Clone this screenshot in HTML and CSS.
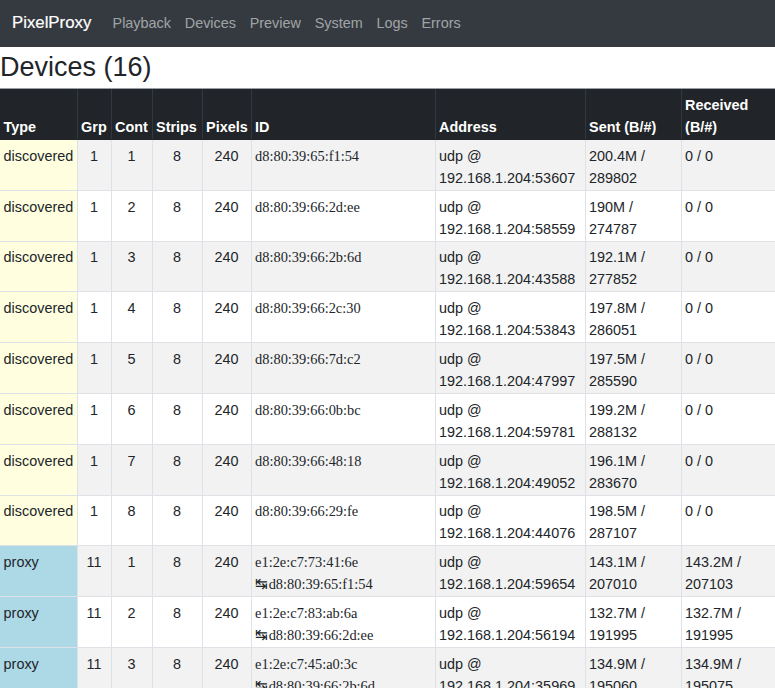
FILE: index.html
```html
<!DOCTYPE html>
<html lang="en">
<head>
<meta charset="utf-8">
<title>PixelProxy - Devices</title>
<link rel="stylesheet" href="styles.css">
</head>
<body>
<nav class="navbar">
  <a class="brand" href="#">PixelProxy</a>
  <ul class="nav-links">
    <li><a href="#">Playback</a></li>
    <li><a href="#">Devices</a></li>
    <li><a href="#">Preview</a></li>
    <li><a href="#">System</a></li>
    <li><a href="#">Logs</a></li>
    <li><a href="#">Errors</a></li>
  </ul>
</nav>
<main>
  <h1 class="page-title">Devices (16)</h1>
  <table class="devices">
    <colgroup>
      <col class="c-type"><col class="c-grp"><col class="c-cont"><col class="c-strips"><col class="c-pixels"><col class="c-id"><col class="c-addr"><col class="c-sent"><col class="c-recv">
    </colgroup>
    <thead>
      <tr>
        <th>Type</th><th>Grp</th><th>Cont</th><th>Strips</th><th>Pixels</th><th>ID</th><th>Address</th><th>Sent (B/#)</th><th>Received (B/#)</th>
      </tr>
    </thead>
    <tbody>
      <tr><td class="type discovered">discovered</td><td class="num">1</td><td class="num">1</td><td class="num">8</td><td class="num">240</td><td class="id">d8:80:39:65:f1:54</td><td>udp @ 192.168.1.204:53607</td><td>200.4M / 289802</td><td>0 / 0</td></tr>
      <tr><td class="type discovered">discovered</td><td class="num">1</td><td class="num">2</td><td class="num">8</td><td class="num">240</td><td class="id">d8:80:39:66:2d:ee</td><td>udp @ 192.168.1.204:58559</td><td>190M / 274787</td><td>0 / 0</td></tr>
      <tr><td class="type discovered">discovered</td><td class="num">1</td><td class="num">3</td><td class="num">8</td><td class="num">240</td><td class="id">d8:80:39:66:2b:6d</td><td>udp @ 192.168.1.204:43588</td><td>192.1M / 277852</td><td>0 / 0</td></tr>
      <tr><td class="type discovered">discovered</td><td class="num">1</td><td class="num">4</td><td class="num">8</td><td class="num">240</td><td class="id">d8:80:39:66:2c:30</td><td>udp @ 192.168.1.204:53843</td><td>197.8M / 286051</td><td>0 / 0</td></tr>
      <tr><td class="type discovered">discovered</td><td class="num">1</td><td class="num">5</td><td class="num">8</td><td class="num">240</td><td class="id">d8:80:39:66:7d:c2</td><td>udp @ 192.168.1.204:47997</td><td>197.5M / 285590</td><td>0 / 0</td></tr>
      <tr><td class="type discovered">discovered</td><td class="num">1</td><td class="num">6</td><td class="num">8</td><td class="num">240</td><td class="id">d8:80:39:66:0b:bc</td><td>udp @ 192.168.1.204:59781</td><td>199.2M / 288132</td><td>0 / 0</td></tr>
      <tr><td class="type discovered">discovered</td><td class="num">1</td><td class="num">7</td><td class="num">8</td><td class="num">240</td><td class="id">d8:80:39:66:48:18</td><td>udp @ 192.168.1.204:49052</td><td>196.1M / 283670</td><td>0 / 0</td></tr>
      <tr><td class="type discovered">discovered</td><td class="num">1</td><td class="num">8</td><td class="num">8</td><td class="num">240</td><td class="id">d8:80:39:66:29:fe</td><td>udp @ 192.168.1.204:44076</td><td>198.5M / 287107</td><td>0 / 0</td></tr>
      <tr><td class="type proxy">proxy</td><td class="num">11</td><td class="num">1</td><td class="num">8</td><td class="num">240</td><td class="id">e1:2e:c7:73:41:6e<br><span class="link">↹</span>d8:80:39:65:f1:54</td><td>udp @ 192.168.1.204:59654</td><td>143.1M / 207010</td><td>143.2M / 207103</td></tr>
      <tr><td class="type proxy">proxy</td><td class="num">11</td><td class="num">2</td><td class="num">8</td><td class="num">240</td><td class="id">e1:2e:c7:83:ab:6a<br><span class="link">↹</span>d8:80:39:66:2d:ee</td><td>udp @ 192.168.1.204:56194</td><td>132.7M / 191995</td><td>132.7M / 191995</td></tr>
      <tr><td class="type proxy">proxy</td><td class="num">11</td><td class="num">3</td><td class="num">8</td><td class="num">240</td><td class="id">e1:2e:c7:45:a0:3c<br><span class="link">↹</span>d8:80:39:66:2b:6d</td><td>udp @ 192.168.1.204:35969</td><td>134.9M / 195060</td><td>134.9M / 195075</td></tr>
      <tr><td class="type proxy">proxy</td><td class="num">11</td><td class="num">4</td><td class="num">8</td><td class="num">240</td><td class="id">e1:2e:c7:12:9c:30<br><span class="link">↹</span>d8:80:39:66:2c:30</td><td>udp @ 192.168.1.204:41207</td><td>139.6M / 201884</td><td>139.6M / 201890</td></tr>
      <tr><td class="type proxy">proxy</td><td class="num">11</td><td class="num">5</td><td class="num">8</td><td class="num">240</td><td class="id">e1:2e:c7:5a:7d:c2<br><span class="link">↹</span>d8:80:39:66:7d:c2</td><td>udp @ 192.168.1.204:52318</td><td>138.2M / 199741</td><td>138.2M / 199748</td></tr>
      <tr><td class="type proxy">proxy</td><td class="num">11</td><td class="num">6</td><td class="num">8</td><td class="num">240</td><td class="id">e1:2e:c7:0e:0b:bc<br><span class="link">↹</span>d8:80:39:66:0b:bc</td><td>udp @ 192.168.1.204:38844</td><td>140.7M / 203512</td><td>140.7M / 203519</td></tr>
      <tr><td class="type proxy">proxy</td><td class="num">11</td><td class="num">7</td><td class="num">8</td><td class="num">240</td><td class="id">e1:2e:c7:63:48:18<br><span class="link">↹</span>d8:80:39:66:48:18</td><td>udp @ 192.168.1.204:60112</td><td>137.4M / 198630</td><td>137.4M / 198634</td></tr>
      <tr><td class="type proxy">proxy</td><td class="num">11</td><td class="num">8</td><td class="num">8</td><td class="num">240</td><td class="id">e1:2e:c7:2f:29:fe<br><span class="link">↹</span>d8:80:39:66:29:fe</td><td>udp @ 192.168.1.204:45530</td><td>141.8M / 205027</td><td>141.8M / 205031</td></tr>
    </tbody>
  </table>
</main>
</body>
</html>
```

FILE: styles.css
```css
html {
  scrollbar-width: none;
}
html::-webkit-scrollbar {
  display: none;
}
body {
  margin: 0;
  font-family: "Liberation Sans", Arial, sans-serif;
  font-size: 14.4px;
  line-height: 22px;
  color: #212529;
  background: #fff;
}

.navbar {
  display: flex;
  align-items: center;
  height: 47px;
  padding: 0 12px;
  background: #343a40;
  box-sizing: border-box;
}
.brand {
  color: #fff;
  font-size: 16.8px;
  text-decoration: none;
  margin-right: 14.4px;
  margin-top: -2px;
  -webkit-text-stroke: 0.2px #fff;
}
.nav-links {
  display: flex;
  list-style: none;
  margin: 0;
  padding: 0;
}
.nav-links a {
  display: block;
  padding: 0 6.9px;
  color: rgba(255, 255, 255, 0.55);
  text-decoration: none;
  font-size: 14.4px;
  line-height: 20px;
  margin-top: -1px;
}

.page-title {
  margin: 0;
  font-size: 27px;
  font-weight: 400;
  line-height: 41px;
}

.devices {
  width: 775px;
  table-layout: fixed;
  border-collapse: collapse;
}
.c-type { width: 77px; }
.c-grp { width: 34px; }
.c-cont { width: 41px; }
.c-strips { width: 50px; }
.c-pixels { width: 49px; }
.c-id { width: 184px; }
.c-addr { width: 150px; }
.c-sent { width: 96px; }
.c-recv { width: 94px; }

.devices th,
.devices td {
  text-align: left;
}
.devices thead th {
  padding: 5px 3.6px 1px;
  background: #212529;
  color: #fff;
  font-weight: 700;
  vertical-align: bottom;
  border-top: 1px solid #9aa0a6;
  border-left: 1px solid #32383e;
  border-bottom: 1px solid #212529;
}
.devices thead th:first-child {
  border-left: none;
}
.devices td {
  padding: 4.8px 3.6px 1px;
  vertical-align: top;
  border-top: 1px solid #dee2e6;
  border-left: 1px solid #dee2e6;
}
.devices td:first-child {
  border-left: none;
}
.devices tbody tr:nth-child(odd) {
  background: #f2f2f2;
}
.devices td.num {
  text-align: center;
}
.devices td.id {
  font-family: "Liberation Serif", "Times New Roman", serif;
  font-size: 14.4px;
}
.link {
  font-family: "DejaVu Sans", sans-serif;
  font-size: 15px;
  line-height: 1;
  margin-right: 1px;
}
.devices td.discovered {
  background: #ffffe0;
}
.devices td.proxy {
  background: #add8e6;
}
```
